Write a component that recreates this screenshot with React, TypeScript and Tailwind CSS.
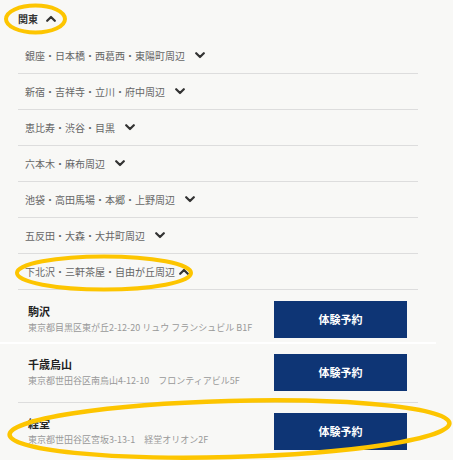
import React from 'react';

const areas = [
  '銀座・日本橋・西葛西・東陽町周辺',
  '新宿・吉祥寺・立川・府中周辺',
  '恵比寿・渋谷・目黒',
  '六本木・麻布周辺',
  '池袋・高田馬場・本郷・上野周辺',
  '五反田・大森・大井町周辺',
];

const studios = [
  { name: '駒沢', address: '東京都目黒区東が丘2-12-20 リュウ フランシュビル B1F', box: 'pt-[11px] pb-[4px] border-b-2 border-white -mx-[18px] px-[18px]' },
  { name: '千歳烏山', address: '東京都世田谷区南烏山4-12-10　フロンティアビル5F', box: 'pt-[10px] pb-[11px] border-b border-[#dddddd]' },
  { name: '経堂', address: '東京都世田谷区宮坂3-13-1　経堂オリオン2F', box: 'pt-[10px] pb-[11px]' },
];

const Chevron = ({ up = false }: { up?: boolean }) => (
  <svg width="10" height="7" viewBox="0 0 10 7" className="shrink-0">
    <polyline
      points={up ? '1.2,5.8 5,2 8.8,5.8' : '1.2,1.2 5,5 8.8,1.2'}
      fill="none"
      stroke="#333"
      strokeWidth="2.2"
      strokeLinecap="round"
      strokeLinejoin="round"
    />
  </svg>
);

export default function App() {
  return (
    <div
      className="relative w-[453px] h-[460px] overflow-hidden bg-[#f8f8f6]"
      style={{ fontFamily: '"Noto Sans CJK JP", "Noto Sans", sans-serif' }}
    >
      <div className="flex items-center gap-[8px] h-[38px] pl-[18px] pb-[2px]">
        <span className="text-[10px] font-bold text-[#333]">関東</span>
        <Chevron up />
      </div>

      <div className="ml-[18px] w-[400px]">
        {areas.map((a) => (
          <div key={a} className="flex items-center gap-[10px] h-[36px] pl-[7px] border-b border-[#dddddd]">
            <span className="text-[10px] text-[#666]">{a}</span>
            <Chevron />
          </div>
        ))}
        <div className="flex items-center gap-[4px] h-[36px] pl-[7px] border-b border-[#dddddd]">
          <span className="text-[10px] text-[#666]">下北沢・三軒茶屋・自由が丘周辺</span>
          <Chevron up />
        </div>

        {studios.map((s) => (
          <div key={s.name} className={s.box}>
            <div className="flex items-start justify-between pl-[10px] pr-[11px]">
              <div className="pt-[2px]">
                <div className="text-[11px] leading-[16px] font-bold text-[#222]">{s.name}</div>
                <div className="mt-[2px] text-[9px] leading-[14px] text-[#999] whitespace-nowrap">{s.address}</div>
              </div>
              <button className="w-[133px] h-[37px] bg-[#0e3575] text-white text-[11px] font-bold shrink-0">
                体験予約
              </button>
            </div>
          </div>
        ))}
      </div>

      <svg className="absolute inset-0 pointer-events-none" width="453" height="460" viewBox="0 0 453 460">
        <ellipse cx="35.5" cy="19" rx="29.5" ry="13.5" fill="none" stroke="#fdc500" strokeWidth="4" />
        <ellipse cx="104" cy="273" rx="87" ry="16.5" fill="none" stroke="#fdc500" strokeWidth="4" />
        <ellipse cx="229.5" cy="429" rx="220" ry="28" fill="none" stroke="#fdc500" strokeWidth="4.5" transform="rotate(-1.5 229.5 429)" />
      </svg>
    </div>
  );
}
